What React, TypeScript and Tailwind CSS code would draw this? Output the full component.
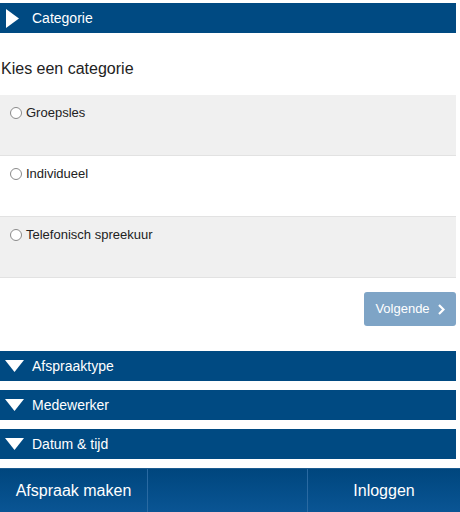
import React from "react";

const font = { fontFamily: '"Liberation Sans", Arial, sans-serif' };

function Bar({ label, open }: { label: string; open?: boolean }) {
  return (
    <div className="flex h-[30px] w-[456px] items-center bg-[#004a82] text-white">
      <div className="flex w-[32px] items-center pl-[6px]">
        {open ? (
          <svg width="13" height="19" viewBox="0 0 13 19">
            <polygon points="0,0 13,9.5 0,19" fill="white" />
          </svg>
        ) : (
          <svg width="19" height="12" viewBox="0 0 19 12" className="-ml-[1px]">
            <polygon points="0,0 19,0 9.5,12" fill="white" />
          </svg>
        )}
      </div>
      <span className="text-[14px]">{label}</span>
    </div>
  );
}

function Option({ label, gray }: { label: string; gray?: boolean }) {
  return (
    <div
      className={`h-[61px] w-[456px] border-b border-[#e2e2e2] pl-[10px] pt-[10px] ${
        gray ? "bg-[#f0f0f0]" : "bg-white"
      }`}
    >
      <label className="flex items-center text-[13px] leading-[16px] text-[#222]">
        <span className="mr-[4px] inline-block h-[12px] w-[12px] rounded-full border border-[#8a8a8a] bg-white" />
        {label}
      </label>
    </div>
  );
}

export default function App() {
  return (
    <div className="h-[512px] w-[460px] overflow-hidden bg-white" style={font}>
      <div className="pt-[3px]">
        <Bar label="Categorie" open />
      </div>
      <div className="h-[62px] pl-[1px] pt-[27px] text-[16px] leading-[18px] text-[#222]">Kies een categorie</div>
      <Option label="Groepsles" gray />
      <Option label="Individueel" />
      <Option label="Telefonisch spreekuur" gray />
      <div className="flex w-[456px] justify-end pt-[14px]">
        <button className="flex h-[34px] w-[92px] items-center justify-center gap-[8px] rounded-[3px] bg-[#7ea4c6] text-[13px] text-white">
          Volgende
          <svg width="7" height="11" viewBox="0 0 7 11">
            <polyline points="1,1 5.5,5.5 1,10" fill="none" stroke="white" strokeWidth="2.2" />
          </svg>
        </button>
      </div>
      <div className="flex flex-col gap-[9px] pt-[25px]">
        <Bar label="Afspraaktype" />
        <Bar label="Medewerker" />
        <Bar label="Datum & tijd" />
      </div>
      <div className="mt-[9px] flex h-[44px] w-[460px] border-t border-[#1c5c91] bg-gradient-to-b from-[#00467e] to-[#0a5594] text-[16px] text-white">
        <div className="flex w-[148px] items-center justify-center border-r border-[#2a6aa2]">Afspraak maken</div>
        <div className="w-[160px] border-r border-[#2a6aa2]" />
        <div className="flex flex-1 items-center justify-center">Inloggen</div>
      </div>
    </div>
  );
}
